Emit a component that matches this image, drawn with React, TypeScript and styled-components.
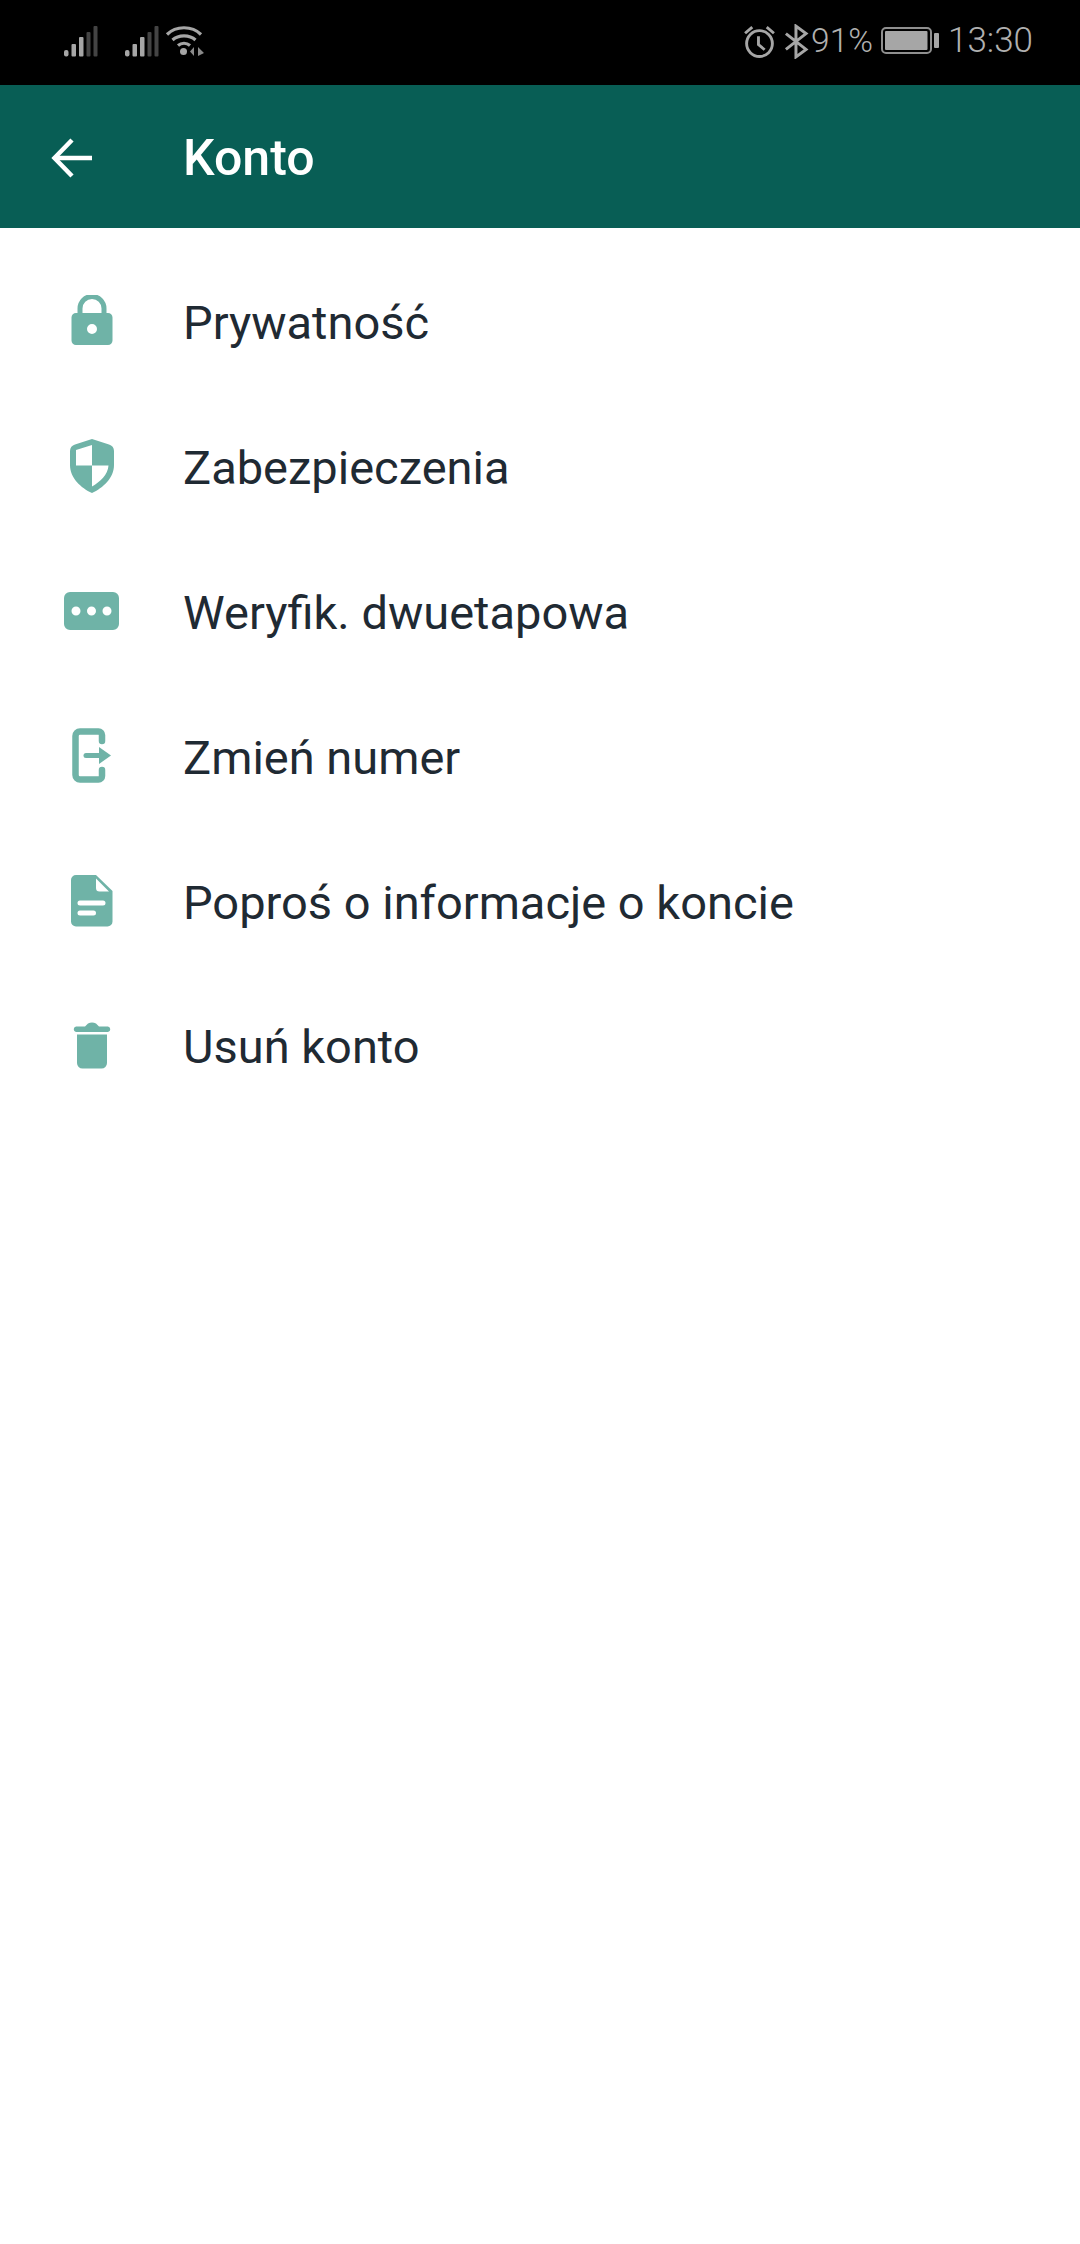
import React, { FunctionComponent } from "react";
import styled, { createGlobalStyle } from "styled-components";

const ICON = "#6fb3a7";

// ICONS //
const LockIcon = () => (
    <svg width="42" height="53" viewBox="0 0 42 53">
        <path d="M9 20v-6.500a12 12 0 0 1 24 0V20" fill="none" stroke={ICON} strokeWidth="5" />
        <path fillRule="evenodd" fill={ICON} d="M5 18h32a4.500 4.500 0 0 1 4.500 4.500v23A4.500 4.500 0 0 1 37 50H5a4.500 4.500 0 0 1-4.500-4.500v-23A4.500 4.500 0 0 1 5 18zM21 29a5 5 0 1 0 0 10 5 5 0 0 0 0-10z" />
    </svg>
);

const ShieldIcon = () => (
    <svg width="44" height="54" viewBox="0 0 44 54">
        <path fillRule="evenodd" fill={ICON} d="M22 0 39 5.500C42 6.500 44 8.500 44 12V26C44 39 33 49 22 54 11 49 0 39 0 26V12C0 8.500 2 6.500 5 5.500zM22 6 6 11V26.500H22zM22 26.500V47.500C30 43 38 35.500 38.500 26.500z" />
    </svg>
);

const DotsIcon = () => (
    <svg width="55" height="38" viewBox="0 0 55 38">
        <path fillRule="evenodd" fill={ICON} d="M6 0h43a6 6 0 0 1 6 6v26a6 6 0 0 1-6 6H6a6 6 0 0 1-6-6V6a6 6 0 0 1 6-6zM12 14.500a4.500 4.500 0 1 0 0 9 4.500 4.500 0 0 0 0-9zM27.500 14.500a4.500 4.500 0 1 0 0 9 4.500 4.500 0 0 0 0-9zM43 14.500a4.500 4.500 0 1 0 0 9 4.500 4.500 0 0 0 0-9z" />
    </svg>
);

const ExitIcon = () => (
    <svg width="39" height="55" viewBox="0 0 39 55">
        <path d="M30 13V7a3.500 3.500 0 0 0-3.500-3.500H8A4.500 4.500 0 0 0 3.500 8v39A4.500 4.500 0 0 0 8 51.500h18.500A3.500 3.500 0 0 0 30 48v-6" fill="none" stroke={ICON} strokeWidth="6.500" strokeLinecap="round" />
        <path d="M14 27.500h14" stroke={ICON} strokeWidth="5" strokeLinecap="round" />
        <path d="M27 19l12 8.500-12 8.500z" fill={ICON} />
    </svg>
);

const DocIcon = () => (
    <svg width="42" height="52" viewBox="0 0 42 52">
        <path fillRule="evenodd" fill={ICON} d="M5 0H25L41.500 16V46.500A5 5 0 0 1 36.500 51.500H5A5 5 0 0 1 0 46.500V5A5 5 0 0 1 5 0zM25 3.500V13A3.500 3.500 0 0 0 28.500 16.500H38zM9 25.500a2.500 2.500 0 0 0 0 5H32a2.500 2.500 0 0 0 0-5zM9 35.500a2.500 2.500 0 0 0 0 5H22.500a2.500 2.500 0 0 0 0-5z" />
    </svg>
);

const TrashIcon = () => (
    <svg width="38" height="47" viewBox="0 0 38 47">
        <path fill={ICON} d="M3 4.500H12L15 1.500Q19 -.5 23 1.500L26 4.500H35a2.800 2.800 0 0 1 0 5.500H3A2.800 2.800 0 0 1 3 4.500z" />
        <path fill={ICON} d="M4 12.500H34V41A5.500 5.500 0 0 1 28.500 46.500H9.500A5.500 5.500 0 0 1 4 41z" />
    </svg>
);

const SignalIcon = () => (
    <svg width="34" height="31" viewBox="0 0 34 31">
        <rect x="0" y="24" width="4.500" height="6.500" rx="2" fill="#a6a6a6" />
        <rect x="7.500" y="18" width="4.500" height="12.500" rx="1" fill="#a6a6a6" />
        <rect x="15" y="11" width="4.500" height="19.500" rx="1" fill="#a6a6a6" />
        <rect x="22.500" y="6" width="4" height="24.500" rx="1" fill="#444" />
        <rect x="29.500" y="0" width="4" height="30.500" rx="1" fill="#444" />
    </svg>
);

const WifiIcon = () => (
    <svg width="40" height="32" viewBox="0 0 40 32" fill="none" stroke="#a6a6a6" strokeWidth="3.200">
        <path d="M2 9.500C11 .5 27 .5 36 9.500" />
        <path d="M7.500 15C13.500 9.500 24.500 9.500 30.500 15" />
        <path d="M13 20.500C16.500 17.500 21.500 17.500 25 20.500" />
        <circle cx="18.500" cy="26.500" r="3.500" fill="#a6a6a6" stroke="none" />
        <path d="M29 22v9l-4-4.500zM33 22l6 6-6 3z" fill="#8a8a8a" stroke="none" />
    </svg>
);

const AlarmIcon = () => (
    <svg width="33" height="33" viewBox="0 0 32 32" fill="none" stroke="#a6a6a6" strokeWidth="2.800">
        <circle cx="16" cy="18" r="12.500" />
        <path d="M15 11v8l6 5" />
        <path d="M9 2 2 8M23 2l7 6" />
    </svg>
);

const BluetoothIcon = () => (
    <svg width="25" height="35" viewBox="0 0 22 33" fill="none" stroke="#a6a6a6" strokeWidth="2.800">
        <path d="M1 9 20 24 10.500 31V2L20 9 1 24" />
    </svg>
);

const BatteryIcon = () => (
    <svg width="59" height="28" viewBox="0 0 59 28">
        <rect x="1" y="1" width="49" height="25" rx="4" fill="none" stroke="#8f8f8f" strokeWidth="2" />
        <rect x="4" y="4" width="42.500" height="19" rx="1" fill="#a6a6a6" />
        <rect x="53" y="6" width="5" height="15" rx="1" fill="#a6a6a6" />
    </svg>
);

const BackIcon = () => (
    <svg width="42" height="40" viewBox="0 0 42 40" fill="none" stroke="#fff" strokeWidth="4.500">
        <path d="M41 20H4" />
        <path d="M21 2 3.500 20 21 38" />
    </svg>
);

const ROWS = [
    { label: "Prywatność", icon: <LockIcon /> },
    { label: "Zabezpieczenia", icon: <ShieldIcon /> },
    { label: "Weryfik. dwuetapowa", icon: <DotsIcon /> },
    { label: "Zmień numer", icon: <ExitIcon /> },
    { label: "Poproś o informacje o koncie", icon: <DocIcon /> },
    { label: "Usuń konto", icon: <TrashIcon /> },
];

const App: FunctionComponent = () => {
    return (
        <Screen>
            <GlobalStyle />
            <StatusBar>
                <StatusLeft>
                    <SignalIcon />
                    <SignalGap />
                    <SignalIcon />
                    <WifiWrap><WifiIcon /></WifiWrap>
                </StatusLeft>
                <StatusRight>
                    <AlarmIcon />
                    <BluetoothIcon />
                    <Percent>91%</Percent>
                    <BatteryIcon />
                    <StatusText>13:30</StatusText>
                </StatusRight>
            </StatusBar>
            <Header>
                <BackSlot><BackIcon /></BackSlot>
                <Title>Konto</Title>
            </Header>
            <List>
                {ROWS.map((row) => {
                    return (
                        <Row key={row.label}>
                            <IconSlot>{row.icon}</IconSlot>
                            <Label>{row.label}</Label>
                        </Row>
                    );
                })}
            </List>
        </Screen>
    );
};

// STYLED COMPONENTS //
const GlobalStyle = createGlobalStyle`
    html, body {
        margin: 0;
        padding: 0;
        background: #fff;
    }
    svg {
        display: block;
    }
`;
const Screen = styled.div`
    width: 1080px;
    height: 2244px;
    background: #fff;
    font-family: Roboto, "Noto Sans", sans-serif;
    overflow: hidden;
`;
const StatusBar = styled.div`
    height: 85px;
    box-sizing: border-box;
    background: #000;
    display: flex;
    justify-content: space-between;
    align-items: center;
    padding: 0 47px 3px 64px;
`;
const StatusLeft = styled.div`
    display: flex;
    align-items: center;
`;
const SignalGap = styled.div`
    width: 27px;
`;
const WifiWrap = styled.div`
    margin-left: 6px;
`;
const StatusRight = styled.div`
    display: flex;
    align-items: center;
    gap: 8px;
`;
const StatusText = styled.span`
    font-size: 35px;
    font-weight: 300;
    line-height: 38px;
    color: #b0b0b0;
`;
const Percent = styled(StatusText)`
    font-size: 33.500px;
    margin-left: -6px;
`;
const Header = styled.div`
    height: 143px;
    padding-top: 2px;
    box-sizing: border-box;
    background: #085e55;
    display: flex;
    align-items: center;
`;
const BackSlot = styled.div`
    width: 183px;
    box-sizing: border-box;
    padding-left: 51px;
`;
const Title = styled.div`
    font-size: 50px;
    font-weight: 500;
    color: #fff;
`;
const List = styled.div`
    padding-top: 23px;
    display: flex;
    flex-direction: column;
`;
const Row = styled.div`
    height: 144.8px;
    display: flex;
    align-items: center;
`;
const IconSlot = styled.div`
    width: 183px;
    box-sizing: border-box;
    padding-bottom: 4px;
    display: flex;
    justify-content: center;
    flex-shrink: 0;
`;
const Label = styled.div`
    font-size: 47px;
    padding-bottom: 1px;
    color: #1f2a33;
`;

export default App;
